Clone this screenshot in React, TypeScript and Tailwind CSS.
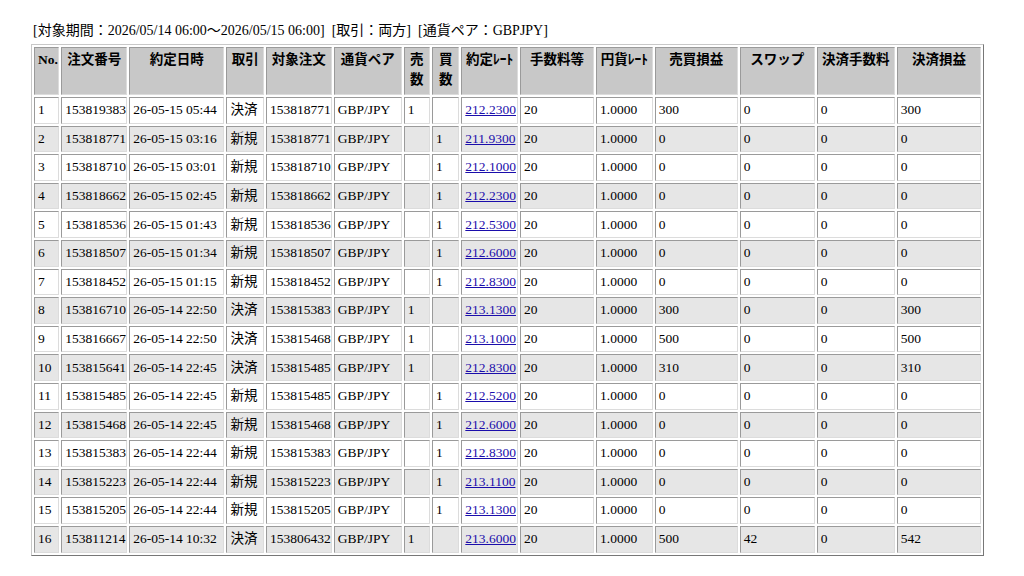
const rows: string[][] = [
["1","153819383","26-05-15 05:44","決済","153818771","1","","212.2300","300","0","300"],
["2","153818771","26-05-15 03:16","新規","153818771","","1","211.9300","0","0","0"],
["3","153818710","26-05-15 03:01","新規","153818710","","1","212.1000","0","0","0"],
["4","153818662","26-05-15 02:45","新規","153818662","","1","212.2300","0","0","0"],
["5","153818536","26-05-15 01:43","新規","153818536","","1","212.5300","0","0","0"],
["6","153818507","26-05-15 01:34","新規","153818507","","1","212.6000","0","0","0"],
["7","153818452","26-05-15 01:15","新規","153818452","","1","212.8300","0","0","0"],
["8","153816710","26-05-14 22:50","決済","153815383","1","","213.1300","300","0","300"],
["9","153816667","26-05-14 22:50","決済","153815468","1","","213.1000","500","0","500"],
["10","153815641","26-05-14 22:45","決済","153815485","1","","212.8300","310","0","310"],
["11","153815485","26-05-14 22:45","新規","153815485","","1","212.5200","0","0","0"],
["12","153815468","26-05-14 22:45","新規","153815468","","1","212.6000","0","0","0"],
["13","153815383","26-05-14 22:44","新規","153815383","","1","212.8300","0","0","0"],
["14","153815223","26-05-14 22:44","新規","153815223","","1","213.1100","0","0","0"],
["15","153815205","26-05-14 22:44","新規","153815205","","1","213.1300","0","0","0"],
["16","153811214","26-05-14 10:32","決済","153806432","1","","213.6000","500","42","542"],
];
const heads = ["No.","注文番号","約定日時","取引","対象注文","通貨ペア","売<br>数","買<br>数","約定ﾚｰﾄ","手数料等","円貨ﾚｰﾄ","売買損益","スワップ","決済手数料","決済損益"];
const widths = [25,65,94,37,65,67,26,27,56,73,56,82,74,77,83];
const td = "border border-t-[#9a9a9a] border-l-[#9a9a9a] border-r-[#dcdcdc] border-b-[#dcdcdc] px-[3px] h-[26.6px] align-middle whitespace-nowrap overflow-hidden";
export default function App() {
  return (
    <div className="bg-white w-[1024px] h-[576px] text-[13.5px] text-black" style={{fontFamily:'"Liberation Serif","Noto Sans CJK JP",serif'}}>
      <div className="pl-[33px] pt-[22px] h-[44px] leading-[18px] text-[14px]">[対象期間：2026/05/14 06:00～2026/05/15 06:00]&nbsp; [取引：両方]&nbsp; [通貨ペア：GBPJPY]</div>
      <table className="ml-[31px] border-separate border-spacing-[2px] border border-t-[#c8c8c8] border-l-[#c8c8c8] border-r-[#777] border-b-[#777] table-fixed w-[953px]">
        <colgroup>{widths.map((w,i)=><col key={i} style={{width:w}}/>)}</colgroup>
        <thead>
          <tr>
            {heads.map((h,i)=>(
              <th key={i} className={`${td} bg-[#c8c8c8] font-bold h-[48px] align-top text-center pt-[2px] leading-[20px]`}>
                {h.includes("<br>") ? <>{h.split("<br>")[0]}<br/>{h.split("<br>")[1]}</> : h}
              </th>
            ))}
          </tr>
        </thead>
        <tbody>
          {rows.map((r,i)=>{
            const bg = i%2===0 ? "bg-white" : "bg-[#e6e6e6]";
            const cells = [r[0],r[1],r[2],r[3],r[4],"GBP/JPY",r[5],r[6],r[7],"20","1.0000",r[8],r[9],"0",r[10]];
            return (
              <tr key={i}>
                {cells.map((c,j)=>(
                  <td key={j} className={`${td} ${bg}`}>
                    {j===8 ? <span className="text-[#1a0dab] underline">{c}</span> : c}
                  </td>
                ))}
              </tr>
            );
          })}
        </tbody>
      </table>
    </div>
  );
}
